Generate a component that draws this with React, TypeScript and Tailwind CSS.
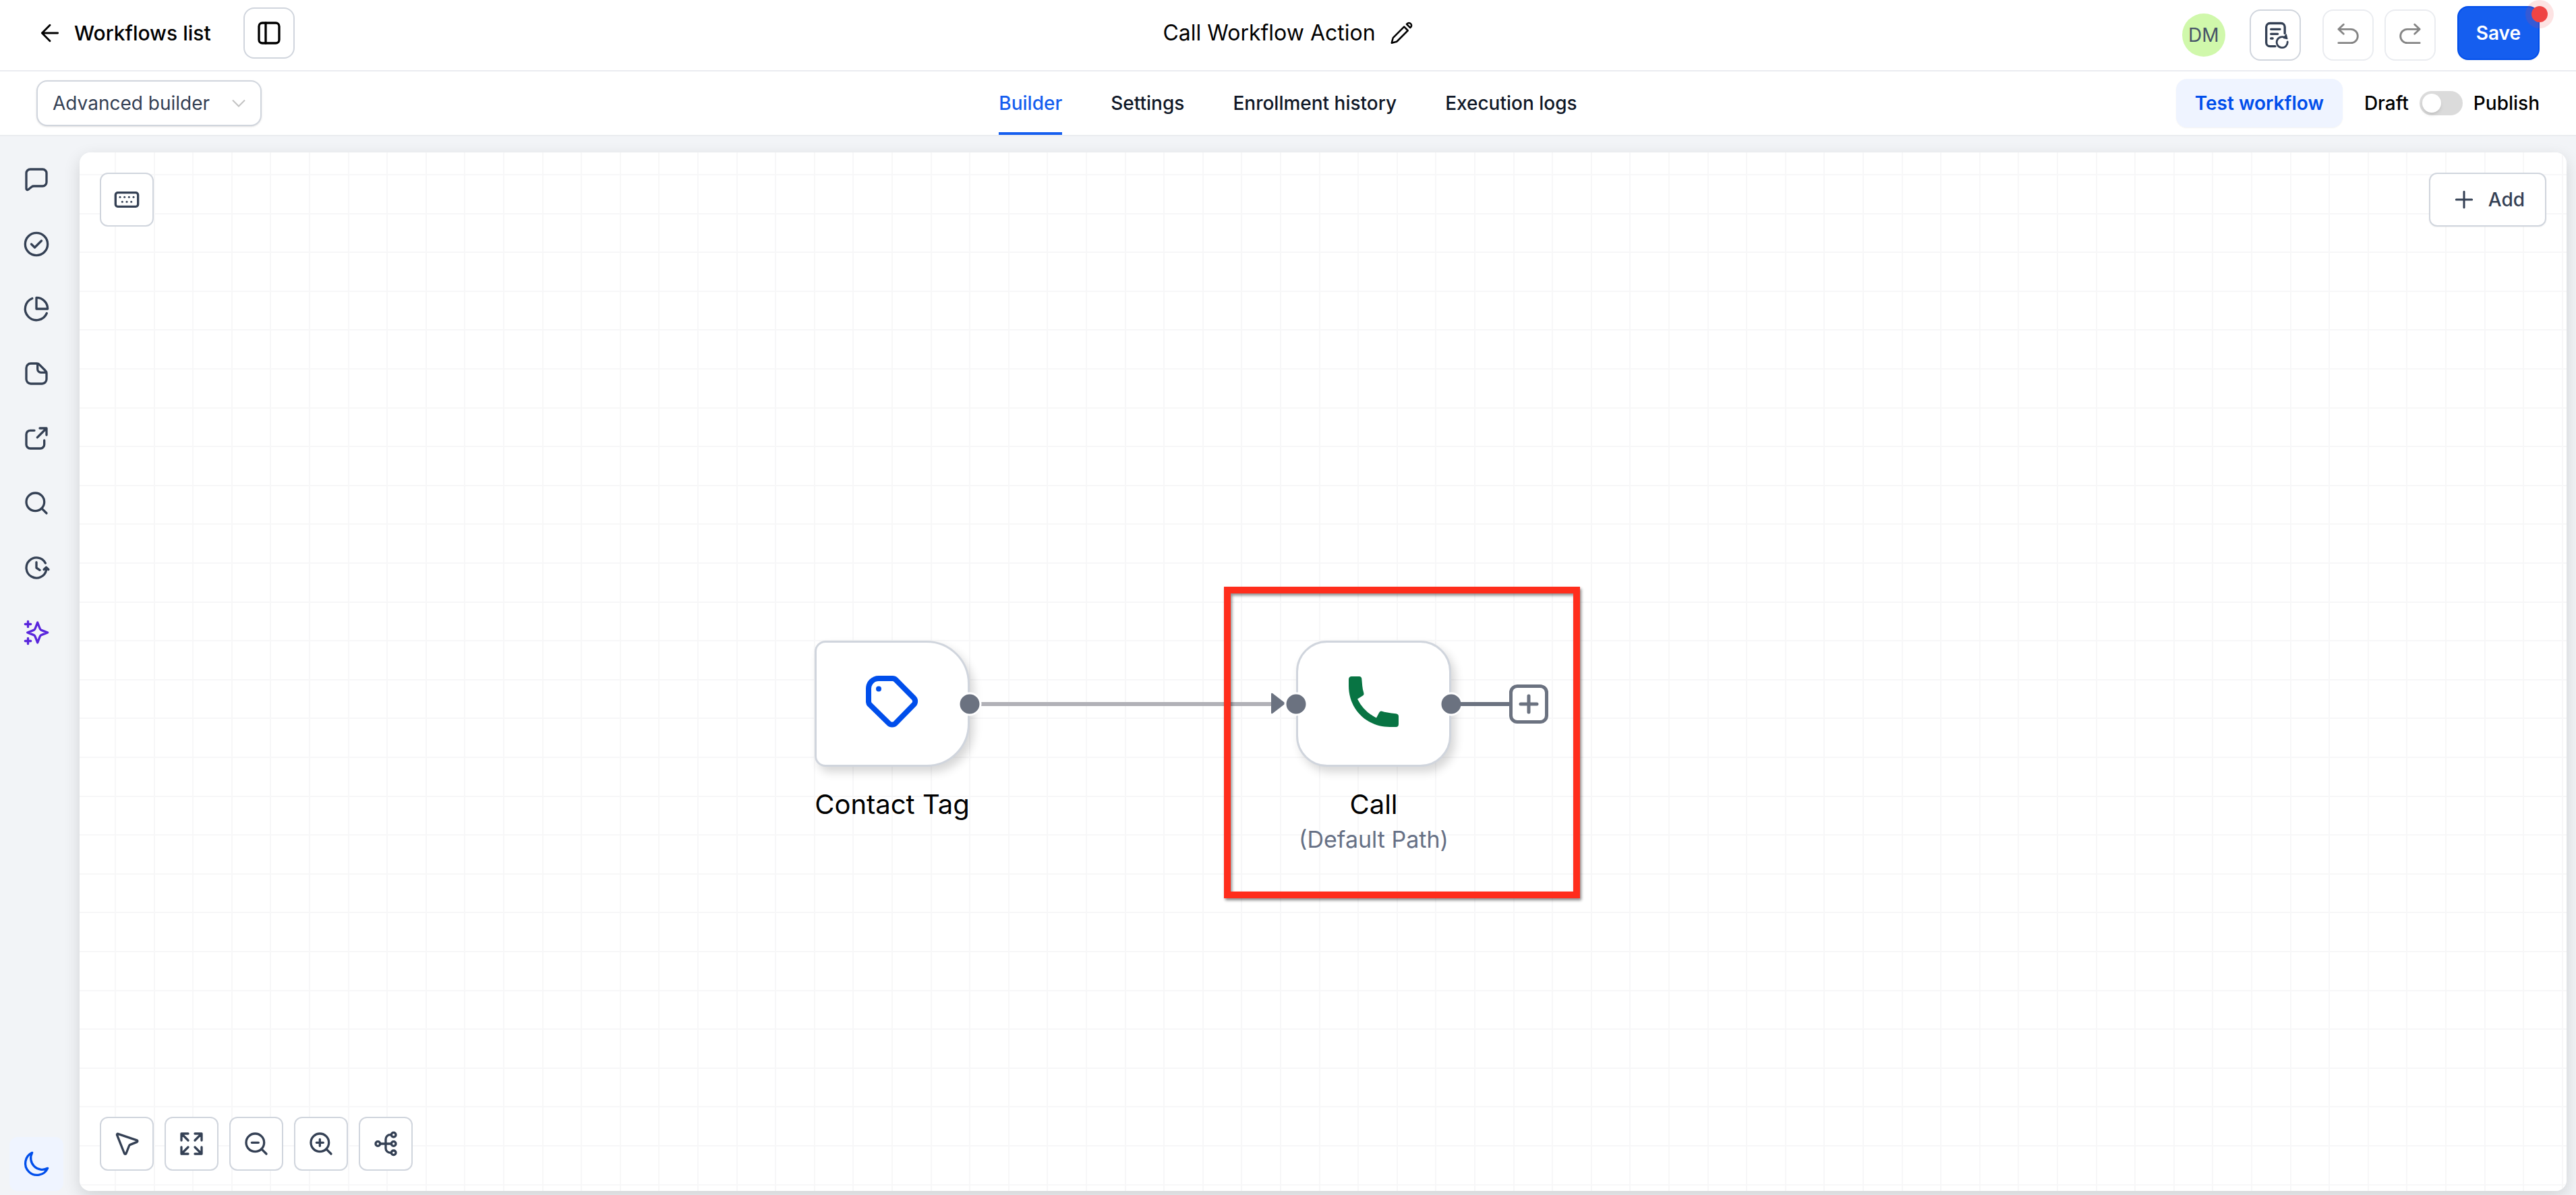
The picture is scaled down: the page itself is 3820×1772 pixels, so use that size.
import type { ReactNode } from "react";

const GRID_STEP = 57.6;
const GRID_LINES = 120;

function gridPath() {
  let d = "";
  for (let i = 0; i < GRID_LINES; i++) {
    const x = Math.round(53 + i * GRID_STEP);
    const y = Math.round(33 + i * GRID_STEP);
    d += `M${x} 0V7000M0 ${y}H7000`;
  }
  return d;
}

function Icon({ children, weight = 2 }: { children: ReactNode; weight?: number }) {
  return (
    <svg
      className="size-10 shrink-0"
      viewBox="0 0 24 24"
      fill="none"
      stroke="currentColor"
      strokeWidth={weight}
      strokeLinecap="round"
      strokeLinejoin="round"
      aria-hidden="true"
    >
      {children}
    </svg>
  );
}

const railItems: { label: string; color: string; icon: ReactNode }[] = [
  {
    label: "Comments",
    color: "text-[#344054]",
    icon: (
      <path d="M3 6.5A3.5 3.5 0 0 1 6.5 3h11A3.5 3.5 0 0 1 21 6.5v8a3.5 3.5 0 0 1-3.5 3.5H9.7c-.9 0-1.3.1-1.9.6l-3 2.4C4 21.600 3 21.2 3 20.300z" />
    ),
  },
  {
    label: "Checks",
    color: "text-[#344054]",
    icon: (
      <>
        <circle cx="12" cy="12" r="10" />
        <path d="M7.500 12l3 3 6-6" />
      </>
    ),
  },
  {
    label: "Statistics",
    color: "text-[#344054]",
    icon: <path d="M21.200 15.900A10 10 0 1 1 8.300 2.700M12 12V2a10 10 0 0 1 10 10z" />,
  },
  {
    label: "Notes",
    color: "text-[#344054]",
    icon: (
      <path d="M3 7a4 4 0 0 1 4-4h5.300c.9 0 1.700.3 2.300 1l5.300 5.300c.7.6 1.100 1.500 1.100 2.400V17a4 4 0 0 1-4 4H7a4 4 0 0 1-4-4zM13 3.200V8a3 3 0 0 0 3 3h4.800" />
    ),
  },
  {
    label: "Open link",
    color: "text-[#344054]",
    icon: (
      <path d="M21 9V3h-6M21 3l-8.200 8.200M10.200 5H6.500A3.500 3.500 0 0 0 3 8.500v9A3.500 3.500 0 0 0 6.500 21h9a3.500 3.500 0 0 0 3.500-3.500v-3.700" />
    ),
  },
  {
    label: "Search",
    color: "text-[#344054]",
    icon: (
      <>
        <circle cx="11" cy="11" r="8" />
        <path d="M21 21l-4.300-4.300" />
      </>
    ),
  },
  {
    label: "History",
    color: "text-[#344054]",
    icon: <path d="M20 7.800A9 9 0 1 0 20.800 14M22.700 13.500l-2-2-2 2M12 7v5l3 2" />,
  },
  {
    label: "Assistant",
    color: "text-[#5925dc]",
    icon: (
      <path d="M4.500 22v-5M4.500 7V2M2 4.500h5M2 19.500h5M13 3l-1.734 4.509c-.282.733-.423 1.100-.643 1.408a3 3 0 0 1-.706.707c-.308.219-.675.360-1.408.642L4 12l4.509 1.734c.733.282 1.100.423 1.408.643.273.194.512.433.707.706.219.308.360.675.642 1.408L13 21l1.734-4.509c.282-.733.423-1.100.643-1.408a3 3 0 0 1 .706-.707c.308-.219.675-.360 1.408-.642L22 12l-4.509-1.734c-.733-.282-1.100-.423-1.408-.643a3 3 0 0 1-.707-.706c-.219-.308-.360-.675-.642-1.408z" />
    ),
  },
];

const viewTools: { label: string; icon: ReactNode }[] = [
  {
    label: "Select",
    icon: (
      <path d="M3.300 4.100c-.2-.6.300-1.100.900-.9l16.800 5.700c.7.300.7 1.200.1 1.500l-6 2.400c-.5.200-.8.500-1 1l-2.700 6.900c-.3.700-1.200.6-1.500 0z" />
    ),
  },
  {
    label: "Fit to screen",
    icon: (
      <path d="M3 9V3h6M3 3l6 6M15 3h6v6M21 3l-6 6M3 15v6h6M3 21l6-6M15 21h6v-6M21 21l-6-6" />
    ),
  },
  {
    label: "Zoom out",
    icon: (
      <>
        <circle cx="11" cy="11" r="8" />
        <path d="M21 21l-4.300-4.300M8 11h6" />
      </>
    ),
  },
  {
    label: "Zoom in",
    icon: (
      <>
        <circle cx="11" cy="11" r="8" />
        <path d="M21 21l-4.300-4.300M8 11h6M11 8v6" />
      </>
    ),
  },
  {
    label: "Arrange nodes",
    icon: (
      <>
        <circle cx="5" cy="12" r="2" />
        <circle cx="19" cy="4" r="2" />
        <circle cx="19" cy="12" r="2" />
        <circle cx="19" cy="20" r="2" />
        <path d="M7 12h10M17 4h-1a4 4 0 0 0-4 4v8a4 4 0 0 0 4 4h1" />
      </>
    ),
  },
];

const keyDots = [
  [6, 9.8],
  [10, 9.8],
  [14, 9.8],
  [18, 9.8],
  [8, 13.9],
  [12, 13.9],
  [16, 13.9],
];

function Header() {
  return (
    <header className="grid h-[106px] grid-cols-[1fr_auto_1fr] items-center border-b-2 border-[#eaecf0] bg-white px-[54px]">
      <div className="flex items-center gap-12 pb-1.5">
        <a href="#workflows" className="flex items-center gap-4 text-3xl font-medium text-black">
          <Icon weight={1.7}>
            <path d="M19 12H5M12 19l-7-7 7-7" />
          </Icon>
          Workflows list
        </a>
        <button
          type="button"
          aria-label="Toggle panel"
          className="flex size-[76px] items-center justify-center rounded-2xl border-2 border-[#d0d5dd] text-black"
        >
          <Icon>
            <rect x="3" y="3" width="18" height="18" rx="3" />
            <path d="M9 3v18" />
          </Icon>
        </button>
      </div>

      <div className="flex items-center gap-5 pb-1.5">
        <h1 className="text-[32px] text-black">Call Workflow Action</h1>
        <button type="button" aria-label="Rename" className="text-black">
          <svg className="size-9" viewBox="0 0 24 24" fill="none" stroke="currentColor" strokeWidth="1.700" strokeLinecap="round" strokeLinejoin="round" aria-hidden="true">
            <path d="M18.500 9.500L8 20c-.4.400-.7.600-1.200.700L2.500 21.800l1.100-4.300c.1-.5.300-.8.700-1.200L14.800 5.800zM17.300 3.300l.5-.5c1-1 2.500-1 3.500 0s1 2.500 0 3.500l-.5.500z" />
          </svg>
        </button>
      </div>

      <div className="flex items-center justify-end">
        <div className="flex size-16 items-center justify-center rounded-full bg-[#d0f8ab] text-[28px] text-[#475467]">
          DM
        </div>
        <button
          type="button"
          aria-label="Version history"
          className="ml-9 flex size-[76px] items-center justify-center rounded-2xl border-2 border-[#d0d5dd] text-[#344054]"
        >
          <Icon>
            <path d="M12 22H7.300A3.300 3.300 0 0 1 4 18.700V4.800A3.300 3.300 0 0 1 7.300 1.500h9.900a3.300 3.300 0 0 1 3.300 3.300v5.700M8.200 6.800h8M8.200 11h6M8.200 15h1.500" />
            <path d="M20.600 14.300A4.800 4.800 0 1 0 22.900 18" strokeWidth="1.700" />
            <path d="M19.500 14.500l2.200-3 .9 3.800z" fill="currentColor" strokeWidth="1" />
          </Icon>
        </button>
        <button
          type="button"
          aria-label="Undo"
          className="ml-8 flex size-[76px] items-center justify-center rounded-2xl border-2 border-[#eaecf0] text-[#858585]"
        >
          <Icon weight={1.7}>
            <path d="M8 2.600L3.500 6.800 8 11M3.500 6.800h11a6.100 6.100 0 0 1 0 12.200h-11" />
          </Icon>
        </button>
        <button
          type="button"
          aria-label="Redo"
          className="ml-4 flex size-[76px] items-center justify-center rounded-2xl border-2 border-[#eaecf0] text-[#858585]"
        >
          <Icon weight={1.7}>
            <path d="M16 2.600l4.500 4.200L16 11M20.500 6.800h-11a6.100 6.100 0 0 0 0 12.200h11" />
          </Icon>
        </button>
        <div className="relative ml-8 mb-1.5">
          <button
            type="button"
            className="flex h-20 items-center rounded-2xl border-2 border-[#004eeb] bg-[#155eef] px-[26px] text-[28px] font-semibold text-white shadow-xs"
          >
            Save
          </button>
          <span className="absolute -top-[9px] -right-[21px] flex size-[42px] items-center justify-center rounded-full bg-[#ef4444]/15">
            <span className="size-6 rounded-full bg-[#ef4444]" />
          </span>
        </div>
      </div>
    </header>
  );
}

const tabs = ["Builder", "Settings", "Enrollment history", "Execution logs"];

function TabBar() {
  return (
    <div className="grid h-24 grid-cols-[1fr_auto_1fr] items-center border-b-2 border-[#eaecf0] bg-white px-[54px] text-[28px]">
      <div className="relative w-[334px]">
        <select
          aria-label="Builder type"
          className="h-[68px] w-full appearance-none rounded-2xl border-2 border-[#d0d5dd] bg-white px-[22px] text-[#344054] shadow-sm"
        >
          <option>Advanced builder</option>
        </select>
        <svg className="pointer-events-none absolute top-7 right-6 h-3 w-5" viewBox="0 0 20 12" fill="none" stroke="#c2c2c2" strokeWidth="2" aria-hidden="true">
          <path d="M1 1.500l9 9 9-9" />
        </svg>
      </div>

      <nav className="flex gap-18 self-stretch font-medium">
        {tabs.map((tab, i) => (
          <a
            key={tab}
            href={"#" + tab.toLowerCase().replace(" ", "-")}
            aria-current={i === 0 ? "page" : undefined}
            className={
              i === 0
                ? "flex items-center border-b-4 border-[#155eef] pt-1 text-[#155eef]"
                : "flex items-center border-b-4 border-transparent pt-1 text-[#101828]"
            }
          >
            {tab}
          </a>
        ))}
      </nav>

      <div className="flex items-center justify-end font-medium text-black">
        <button
          type="button"
          className="h-[72px] rounded-2xl bg-[#eff4ff] px-7 font-semibold text-[#004eeb] shadow-xs"
        >
          Test workflow
        </button>
        <label className="ml-8 flex items-center gap-4">
          Draft
          <input
            type="checkbox"
            role="switch"
            aria-label="Publish workflow"
            className="flex h-9 w-16 appearance-none items-center rounded-full bg-[#dbdbdb] px-1 before:size-7 before:rounded-full before:bg-white before:shadow-md before:content-['']"
          />
          Publish
        </label>
      </div>
    </div>
  );
}

function Rail() {
  return (
    <aside className="flex w-[118px] shrink-0 flex-col justify-between pl-3.5">
      <nav className="flex flex-col gap-4">
        {railItems.map((item) => (
          <button
            key={item.label}
            type="button"
            aria-label={item.label}
            className={"flex size-20 items-center justify-center " + item.color}
          >
            <Icon>{item.icon}</Icon>
          </button>
        ))}
      </nav>
      <button
        type="button"
        aria-label="Dark mode"
        className="flex size-20 items-center justify-center rounded-xl bg-[#eff4ff] text-[#004eeb]"
      >
        <Icon>
          <path d="M22 15.800A10.200 10.200 0 0 1 8.200 2a10.400 10.400 0 1 0 13.800 13.800z" />
        </Icon>
      </button>
    </aside>
  );
}

const toolButton =
  "flex h-20 items-center justify-center rounded-xl border-2 border-[#d0d5dd] bg-white text-[#344054]";

function Handle({ side }: { side: "left" | "right" }) {
  return (
    <span
      className={
        side === "left"
          ? "absolute top-1/2 left-0 size-[35px] -translate-1/2 rounded-full border-3 border-white bg-[#6b7280]"
          : "absolute top-1/2 left-full size-[35px] -translate-1/2 rounded-full border-3 border-white bg-[#6b7280]"
      }
    />
  );
}

function Flow() {
  return (
    <>
      {/* Connection between the trigger and the call step */}
      <div className="absolute top-[815px] left-[1337px] h-1.5 w-[431px] bg-[#b1b1b7]" />
      <svg className="absolute top-[801px] left-[1766px] h-8 w-6" viewBox="0 0 24 34" preserveAspectRatio="none" aria-hidden="true">
        <path d="M1 2v30q0 2 2 1L20.500 18.500q1.500-1.500 0-3L3 1Q1 0 1 2z" fill="#6b7280" />
      </svg>

      <div className="absolute top-[724px] left-[1090px] flex w-[230px] flex-col items-center gap-8">
        <div className="relative w-full">
          <div className="flex h-[187px] items-center justify-center rounded-l-2xl rounded-r-[64px] border-3 border-[#d0d5dd] bg-white shadow-[6px_8px_14px_rgba(0,0,0,0.16)]">
            <svg className="mb-1.5 size-20" viewBox="0 0 80 80" fill="none" stroke="#004eeb" strokeWidth="8" aria-hidden="true">
              <path d="M20 5h20.500c1.900 0 3.600.7 5 2.100l26.500 26.800a7 7 0 0 1 0 10L45 71.500a7 7 0 0 1-10 0L7.100 44.100A7 7 0 0 1 5 39V20A15 15 0 0 1 20 5z" />
              <circle cx="20" cy="20.500" r="4" fill="#004eeb" stroke="none" />
            </svg>
          </div>
          <Handle side="right" />
        </div>
        <p className="text-[40px] leading-[48px] whitespace-nowrap text-black">Contact Tag</p>
      </div>

      <div className="absolute top-[724px] left-[1804px] flex w-[230px] flex-col items-center">
        <div className="relative w-full">
          <div className="flex h-[187px] items-center justify-center rounded-[46px] border-3 border-[#d0d5dd] bg-white shadow-[6px_8px_14px_rgba(0,0,0,0.16)]">
            <svg className="mb-1.5 size-[75px]" viewBox="0 0 75 75" fill="#087443" aria-hidden="true">
              <path d="M4.500 0H15.500Q19 0 19.300 3.500L20.200 14Q20.600 19 22.300 24.500Q23 27.500 21 28.500L13 33.500Q22 52 41 61.500L45 54Q46.500 51 49.500 51.700Q55 53.500 70 55.200Q74 55.600 74 59.500V70.500Q74 75 70 75H61C26 75 0 48 0 14V4.500Q0 0 4.500 0z" />
            </svg>
          </div>
          <Handle side="left" />
          <Handle side="right" />
        </div>
        <p className="mt-8 text-[40px] leading-[48px] text-black">Call</p>
        <p className="mt-1 text-[34px] leading-[48px] whitespace-nowrap text-[#667085]">(Default Path)</p>
      </div>

      {/* Open end of the call step */}
      <div className="absolute top-[815px] left-[2044px] h-1.5 w-20 bg-[#6b7280]" />
      <button
        type="button"
        aria-label="Add step"
        className="absolute top-[789px] left-[2120px] flex size-[58px] items-center justify-center rounded-xl border-[5px] border-[#6b7280] bg-white text-[#6b7280]"
      >
        <svg className="size-8 shrink-0" viewBox="0 0 32 32" stroke="currentColor" strokeWidth="5" strokeLinecap="round" aria-hidden="true">
          <path d="M4 16h24M16 4v24" />
        </svg>
      </button>

      {/* Highlight around the call step */}
      <div className="pointer-events-none absolute top-[644px] left-[1697px] h-[462px] w-[528px] border-10 border-[#ff2d1c] shadow-[2px_3px_4px_rgba(0,0,0,0.45),inset_2px_3px_4px_rgba(0,0,0,0.45)]" />
    </>
  );
}

function Canvas() {
  return (
    <main className="relative flex min-w-0 flex-1 flex-col justify-between overflow-hidden rounded-2xl bg-white p-[30px]">
      <svg className="absolute inset-0 size-full" aria-hidden="true">
        <path d={gridPath()} stroke="#f7f7f8" strokeWidth="2" shapeRendering="crispEdges" />
      </svg>
      <Flow />
      <div className="relative flex justify-between">
        <button type="button" aria-label="Keyboard shortcuts" className={toolButton + " w-20"}>
          <Icon>
            <rect x="2" y="5.800" width="20" height="12.400" rx="2" />
            {keyDots.map(([x, y]) => (
              <circle key={x + "-" + y} cx={x} cy={y} r="0.900" fill="currentColor" stroke="none" />
            ))}
          </Icon>
        </button>
        <button type="button" className={toolButton + " gap-4 px-[30px] text-[28px] font-medium shadow-xs"}>
          <Icon weight={1.8}>
            <path d="M12 5v14M5 12h14" />
          </Icon>
          Add
        </button>
      </div>
      <div className="relative flex gap-4">
        {viewTools.map((tool) => (
          <button key={tool.label} type="button" aria-label={tool.label} className={toolButton + " w-20"}>
            <Icon>{tool.icon}</Icon>
          </button>
        ))}
      </div>
    </main>
  );
}

export default function App() {
  return (
    <div className="flex min-h-screen flex-col bg-[#f2f4f7] font-['Inter',sans-serif]">
      <Header />
      <TabBar />
      <div className="flex flex-1 overflow-hidden pt-6 pr-3.5 pb-1.5">
        <Rail />
        <div className="flex min-w-0 flex-1 rounded-2xl shadow-[0_8px_24px_rgba(0,0,0,0.14)]">
          <Canvas />
        </div>
      </div>
    </div>
  );
}
